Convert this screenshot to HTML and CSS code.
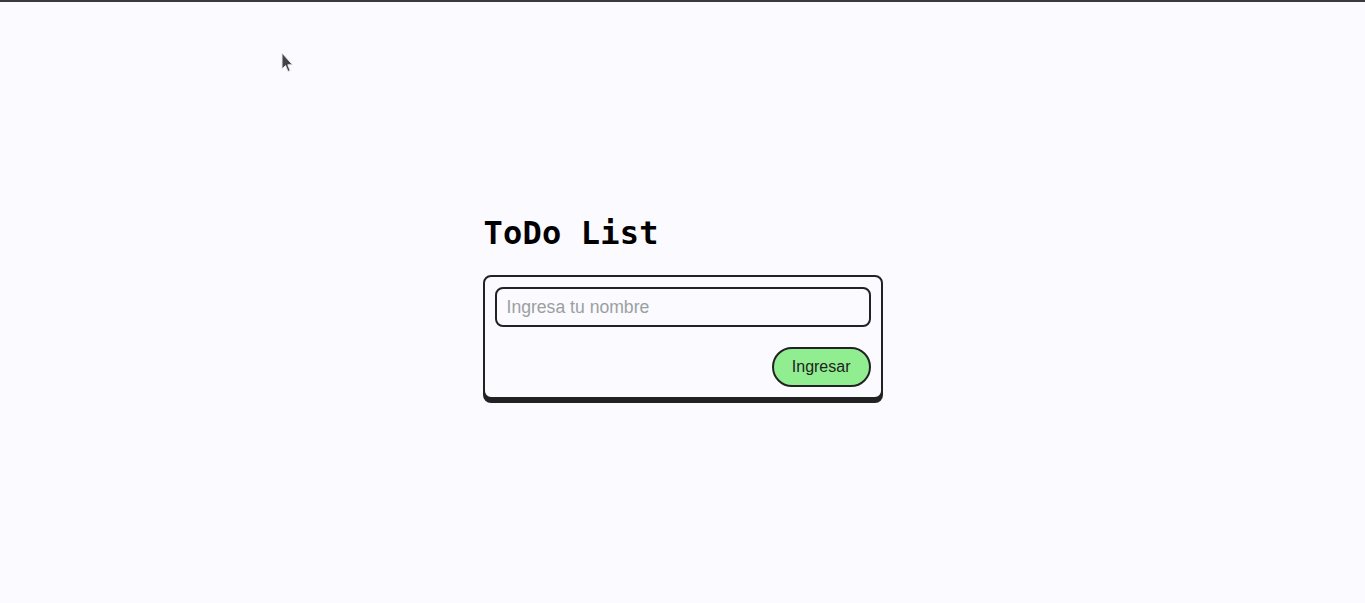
FILE: index.html
```html
<!DOCTYPE html>
<html lang="es">
<head>
<meta charset="utf-8">
<title>ToDo List</title>
<link rel="stylesheet" href="styles.css">
</head>
<body>
<main class="page">
  <section class="todo">
    <h1 class="todo-title">ToDo List</h1>
    <form class="card">
      <input class="card-input" type="text" placeholder="Ingresa tu nombre">
      <div class="card-actions">
        <button class="btn" type="button">Ingresar</button>
      </div>
    </form>
  </section>
</main>
<svg class="cursor" width="14" height="22" viewBox="0 0 14 22">
  <path d="M1 1 L1 17 L4.5 13.5 L7 19.5 L9.2 18.6 L6.8 12.8 L11.5 12.8 Z" fill="#444" stroke="#e8e8ee" stroke-width="1"/>
</svg>
</body>
</html>
```
FILE: styles.css
```css
* { box-sizing: border-box; }
html, body { margin: 0; padding: 0; }
body {
  background: #fafaff;
  border-top: 2px solid #3a3a3c;
  font-family: "Liberation Sans", Arial, sans-serif;
  color: #222;
}
.page {
  min-height: calc(100vh - 2px);
  display: flex;
  align-items: center;
  justify-content: center;
}
.todo {
  width: 400px;
  display: flex;
  flex-direction: column;
  margin-top: 7px;
}
.todo-title {
  font-family: "DejaVu Sans Mono", "Liberation Mono", monospace;
  font-weight: bold;
  font-size: 32px;
  line-height: 40px;
  margin: 0 0 22px 1px;
  color: #000;
  letter-spacing: 0.2px;
}
.card {
  border: 2px solid #222;
  border-radius: 8px;
  box-shadow: 0 4px 0 #222;
  padding: 10px;
  display: flex;
  flex-direction: column;
  gap: 20px;
  background: #fafaff;
}
.card-input {
  height: 40px;
  width: 100%;
  border: 2px solid #222;
  border-radius: 8px;
  padding: 0 10px;
  font-family: "Liberation Sans", Arial, sans-serif;
  font-size: 17.6px;
  background: #fafaff;
  color: #222;
  outline: none;
}
.card-input::placeholder { color: #9aa0a0; }
.card-actions {
  display: flex;
  justify-content: flex-end;
}
.btn {
  height: 40px;
  padding: 0 18px;
  border: 2px solid #222;
  border-radius: 20px;
  background: #90ee90;
  color: #222;
  font-family: "Liberation Sans", Arial, sans-serif;
  font-size: 16px;
}
.cursor {
  position: absolute;
  left: 281px;
  top: 52px;
}
```
